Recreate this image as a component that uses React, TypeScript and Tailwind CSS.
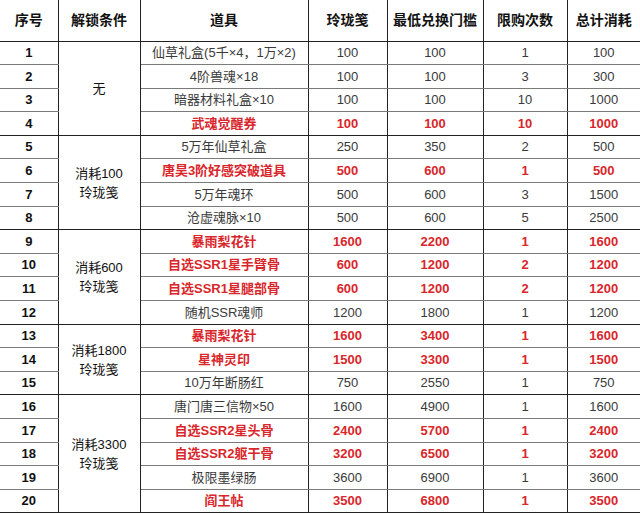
type Row = {
  id: number;
  item: string;
  price: string;
  min: string;
  limit: string;
  total: string;
  red?: boolean;
};

type Group = { label: string[]; rows: Row[] };

const groups: Group[] = [
  {
    label: ["无"],
    rows: [
      { id: 1, item: "仙草礼盒(5千×4，1万×2)", price: "100", min: "100", limit: "1", total: "100" },
      { id: 2, item: "4阶兽魂×18", price: "100", min: "100", limit: "3", total: "300" },
      { id: 3, item: "暗器材料礼盒×10", price: "100", min: "100", limit: "10", total: "1000" },
      { id: 4, item: "武魂觉醒券", price: "100", min: "100", limit: "10", total: "1000", red: true },
    ],
  },
  {
    label: ["消耗100", "玲珑笺"],
    rows: [
      { id: 5, item: "5万年仙草礼盒", price: "250", min: "350", limit: "2", total: "500" },
      { id: 6, item: "唐昊3阶好感突破道具", price: "500", min: "600", limit: "1", total: "500", red: true },
      { id: 7, item: "5万年魂环", price: "500", min: "600", limit: "3", total: "1500" },
      { id: 8, item: "沧虚魂脉×10", price: "500", min: "600", limit: "5", total: "2500" },
    ],
  },
  {
    label: ["消耗600", "玲珑笺"],
    rows: [
      { id: 9, item: "暴雨梨花针", price: "1600", min: "2200", limit: "1", total: "1600", red: true },
      { id: 10, item: "自选SSR1星手臂骨", price: "600", min: "1200", limit: "2", total: "1200", red: true },
      { id: 11, item: "自选SSR1星腿部骨", price: "600", min: "1200", limit: "2", total: "1200", red: true },
      { id: 12, item: "随机SSR魂师", price: "1200", min: "1800", limit: "1", total: "1200" },
    ],
  },
  {
    label: ["消耗1800", "玲珑笺"],
    rows: [
      { id: 13, item: "暴雨梨花针", price: "1600", min: "3400", limit: "1", total: "1600", red: true },
      { id: 14, item: "星神灵印", price: "1500", min: "3300", limit: "1", total: "1500", red: true },
      { id: 15, item: "10万年断肠红", price: "750", min: "2550", limit: "1", total: "750" },
    ],
  },
  {
    label: ["消耗3300", "玲珑笺"],
    rows: [
      { id: 16, item: "唐门唐三信物×50", price: "1600", min: "4900", limit: "1", total: "1600" },
      { id: 17, item: "自选SSR2星头骨", price: "2400", min: "5700", limit: "1", total: "2400", red: true },
      { id: 18, item: "自选SSR2躯干骨", price: "3200", min: "6500", limit: "1", total: "3200", red: true },
      { id: 19, item: "极限墨绿肠", price: "3600", min: "6900", limit: "1", total: "3600" },
      { id: 20, item: "阎王帖", price: "3500", min: "6800", limit: "1", total: "3500", red: true },
    ],
  },
];

const headers = ["序号", "解锁条件", "道具", "玲珑笺", "最低兑换门槛", "限购次数", "总计消耗"];

export default function App() {
  return (
    <div
      className="w-[640px] h-[514px] bg-white overflow-hidden"
      style={{ fontFamily: '"Liberation Sans", "Noto Sans CJK SC", sans-serif' }}
    >
      <table className="w-[640px] table-fixed border-collapse text-center">
        <colgroup>
          <col className="w-[58px]" />
          <col className="w-[82px]" />
          <col className="w-[168px]" />
          <col className="w-[79px]" />
          <col className="w-[96px]" />
          <col className="w-[84px]" />
          <col className="w-[73px]" />
        </colgroup>
        <thead>
          <tr className="h-[41px]">
            {headers.map((h, i) => (
              <th
                key={h}
                className={
                  "p-0 text-[14px] font-bold text-[#111] border-b border-[#222] " +
                  (i < headers.length - 1 ? "border-r" : "")
                }
              >
                {h}
              </th>
            ))}
          </tr>
        </thead>
        <tbody>
          {groups.map((g) =>
            g.rows.map((r, idx) => {
              const last = idx === g.rows.length - 1;
              const line = last ? "border-b border-b-[#222]" : "border-b border-b-[#7a7a7a]";
              const tone = r.red
                ? "text-[#d9262b] font-bold"
                : "text-[#3a3a3a] font-normal";
              return (
                <tr key={r.id} className="h-[23.6px]">
                  <td className={`p-0 text-[13px] font-bold text-[#111] border-r border-r-[#222] ${line}`}>
                    {r.id}
                  </td>
                  {idx === 0 && (
                    <td
                      rowSpan={g.rows.length}
                      className="p-0 text-[13px] leading-[19px] text-[#111] border-r border-r-[#222] border-b border-b-[#222]"
                    >
                      {g.label.map((l) => (
                        <div key={l}>{l}</div>
                      ))}
                    </td>
                  )}
                  <td className={`p-0 text-[13px] whitespace-nowrap border-r border-r-[#222] ${line} ${tone}`}>
                    {r.item}
                  </td>
                  <td className={`p-0 text-[13px] border-r border-r-[#222] ${line} ${tone}`}>{r.price}</td>
                  <td className={`p-0 text-[13px] border-r border-r-[#222] ${line} ${tone}`}>{r.min}</td>
                  <td className={`p-0 text-[13px] border-r border-r-[#222] ${line} ${tone}`}>{r.limit}</td>
                  <td className={`p-0 text-[13px] ${line} ${tone}`}>{r.total}</td>
                </tr>
              );
            })
          )}
        </tbody>
      </table>
    </div>
  );
}
